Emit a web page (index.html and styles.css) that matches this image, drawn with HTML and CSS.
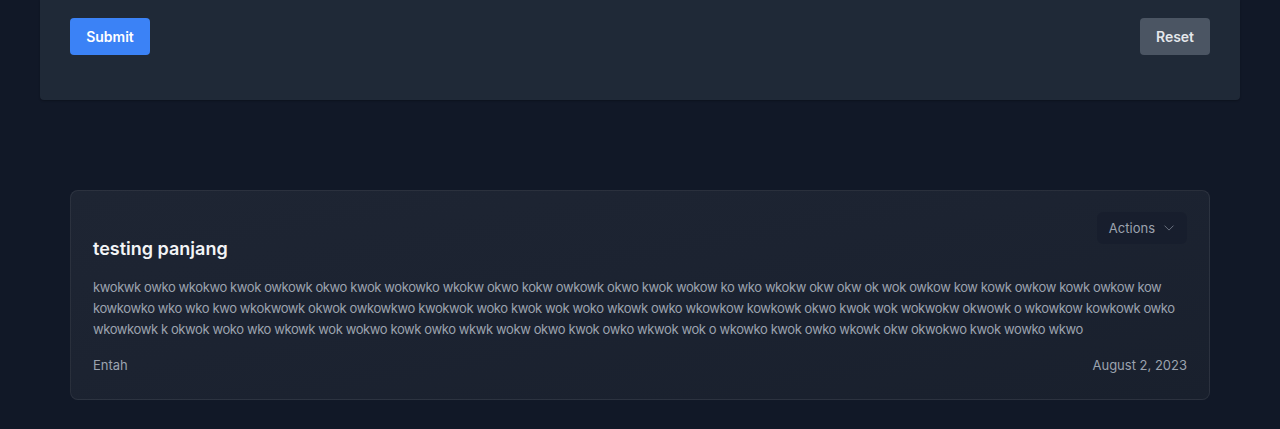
FILE: index.html
```html
<!DOCTYPE html>
<html lang="en">
<head>
<meta charset="utf-8">
<title>Posts</title>
<link rel="stylesheet" href="styles.css">
</head>
<body>
<div class="page">
  <section class="form-panel">
    <div class="form-actions">
      <button class="btn btn-primary" type="submit">Submit</button>
      <button class="btn btn-secondary" type="reset">Reset</button>
    </div>
  </section>

  <article class="card">
    <div class="card-head">
      <h2 class="card-title">testing panjang</h2>
      <button class="actions" type="button">Actions
        <svg class="chev" width="14" height="14" viewBox="0 0 20 20" fill="none" stroke="currentColor" stroke-width="1.4" stroke-linecap="round" stroke-linejoin="round"><path d="M4 7l6 6 6-6"/></svg>
      </button>
    </div>
    <p class="card-body">kwokwk owko wkokwo kwok owkowk okwo kwok wokowko wkokw okwo kokw owkowk okwo kwok wokow ko wko wkokw okw okw ok wok owkow kow kowk owkow kowk owkow kow kowkowko wko wko kwo wkokwowk okwok owkowkwo kwokwok woko kwok wok woko wkowk owko wkowkow kowkowk okwo kwok wok wokwokw okwowk o wkowkow kowkowk owko wkowkowk k okwok woko wko wkowk wok wokwo kowk owko wkwk wokw okwo kwok owko wkwok wok o wkowko kwok owko wkowk okw okwokwo kwok wowko wkwo</p>
    <div class="card-foot">
      <span class="author">Entah</span>
      <span class="date">August 2, 2023</span>
    </div>
  </article>
</div>
</body>
</html>
```

FILE: styles.css
```css
* { box-sizing: border-box; }
html, body { margin: 0; padding: 0; }
body {
  background: #111827;
  font-family: Inter, "Noto Sans", sans-serif;
  color: #e5e7eb;
  height: 429px;
  overflow: hidden;
}
.page {
  padding: 0 40px;
}
.form-panel {
  background: #1f2937;
  border-radius: 0 0 4px 4px;
  padding: 18px 30px 45px;
  box-shadow: 0 1px 2px rgba(0,0,0,0.25);
}
.form-actions {
  display: flex;
  justify-content: space-between;
  align-items: center;
}
.btn {
  font-family: inherit;
  font-size: 14px;
  font-weight: 600;
  height: 37px;
  padding: 0 15px;
  border: none;
  border-radius: 4px;
  cursor: pointer;
}
.btn-primary {
  background: #3b82f6;
  color: #ffffff;
  width: 80px;
}
.btn-secondary {
  background: #4b5563;
  color: #e5e7eb;
  width: 70px;
}
.card {
  margin: 90px 30px 0;
  border: 1px solid rgba(255,255,255,0.07);
  border-radius: 8px;
  background: linear-gradient(170deg, #1e2533 0%, #1c2331 45%, #19202d 100%);
  padding: 21px 22px 24px;
}
.card-head {
  display: flex;
  justify-content: space-between;
  align-items: flex-start;
}
.card-title {
  margin: 23px 0 0;
  font-size: 18px;
  line-height: 28px;
  font-weight: 600;
  color: #f3f4f6;
}
.actions {
  display: flex;
  align-items: center;
  gap: 7px;
  height: 32px;
  padding: 0 11px 0 12px;
  font-family: inherit;
  font-size: 13px;
  color: #9ca3af;
  background: rgba(17,24,39,0.35);
  border: none;
  border-radius: 6px;
}
.chev { color: #6b7280; }
.card-body {
  margin: 14px 0 0;
  font-size: 13px;
  line-height: 21px;
  letter-spacing: -0.4px;
  color: #9ca3af;
}
.card-foot {
  display: flex;
  justify-content: space-between;
  margin-top: 15px;
  font-size: 13px;
  line-height: 20px;
  color: #9ca3af;
}
```
